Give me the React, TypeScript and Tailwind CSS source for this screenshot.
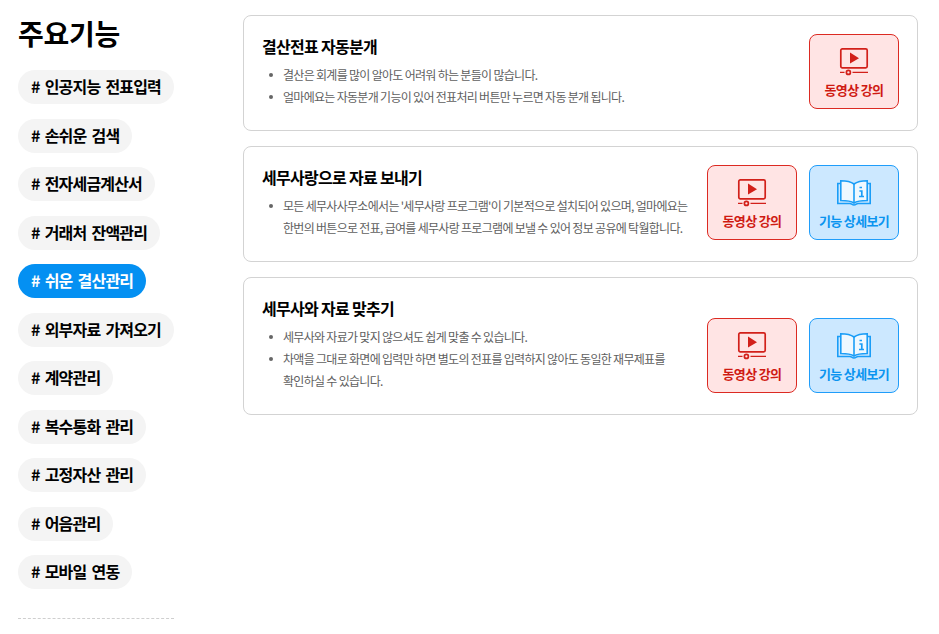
import React from 'react';

const FONT = '[font-family:"Noto_Sans_CJK_KR","Noto_Sans",sans-serif]';

const MENU = [
  { label: '인공지능 전표입력' },
  { label: '손쉬운 검색' },
  { label: '전자세금계산서' },
  { label: '거래처 잔액관리' },
  { label: '쉬운 결산관리', active: true },
  { label: '외부자료 가져오기' },
  { label: '계약관리' },
  { label: '복수통화 관리' },
  { label: '고정자산 관리' },
  { label: '어음관리' },
  { label: '모바일 연동' },
];

const CARDS = [
  {
    title: '결산전표 자동분개',
    items: [
      ['결산은 회계를 많이 알아도 어려워 하는 분들이 많습니다.'],
      ['얼마에요는 자동분개 기능이 있어 전표처리 버튼만 누르면 자동 분개 됩니다.'],
    ],
    detail: false,
  },
  {
    title: '세무사랑으로 자료 보내기',
    items: [
      [
        "모든 세무사사무소에서는 '세무사랑 프로그램'이 기본적으로 설치되어 있으며, 얼마에요는",
        '한번의 버튼으로 전표, 급여를 세무사랑 프로그램에 보낼 수 있어 정보 공유에 탁월합니다.',
      ],
    ],
    detail: true,
  },
  {
    title: '세무사와 자료 맞추기',
    items: [
      ['세무사와 자료가 맞지 않으셔도 쉽게 맞출 수 있습니다.'],
      ['차액을 그대로 화면에 입력만 하면 별도의 전표를 입력하지 않아도 동일한 재무제표를', '확인하실 수 있습니다.'],
    ],
    detail: true,
  },
];

function VideoIcon() {
  return (
    <svg className="overflow-visible" width="28" height="27" viewBox="0 0 28 27" fill="none" stroke="#d2201a" strokeWidth="1.7">
      <rect x="0.8" y="0.8" width="26.4" height="19" rx="1.5" />
      <path d="M10 4.5 L19 10.2 L10 15.6 Z" fill="#d2201a" stroke="none" />
      <path d="M0 24.4 H4.5 M12.5 24.4 H28" strokeWidth="1.4" />
      <circle cx="8.4" cy="24.4" r="2" />
    </svg>
  );
}

function BookIcon() {
  return (
    <svg width="34" height="26" viewBox="0 0 34 26" fill="none" stroke="#1a9df7" strokeWidth="1.6">
      <path
        d="M17 4 C14 1.8 9 0.8 3.8 0.8 V20.5 C9 20.5 14 21 17 23 C20 21 25 20.5 30.2 20.5 V0.8 C25 0.8 20 1.8 17 4 Z"
        fill="#eef8ff"
      />
      <path d="M17 4 V23" />
      <path d="M3.8 3.5 H0.8 V23.5 H13 C14.5 23.5 15 25 17 25 C19 25 19.5 23.5 21 23.5 H33.2 V3.5 H30.2" />
      <path d="M22.5 7.5 H25 M22.4 11 H24.8 V16.5 M22 16.5 H27" strokeWidth="1.7" />
    </svg>
  );
}

function ActionButton({ kind }: { kind: 'video' | 'detail' }) {
  const video = kind === 'video';
  return (
    <div
      className={`flex h-[75px] w-[90px] flex-col items-center rounded-lg border pt-[13px] ${
        video ? 'border-[#dc2a22] bg-[#ffe4e4] text-[#cf1a12]' : 'border-[#1f9dfa] bg-[#cce8ff] text-[#0a94f0]'
      }`}
    >
      <div className="flex h-[27px] items-center">{video ? <VideoIcon /> : <BookIcon />}</div>
      <div className="mt-[6px] text-[13px] leading-[18px] font-bold tracking-[-0.65px] whitespace-nowrap">
        {video ? '동영상 강의' : '기능 상세보기'}
      </div>
    </div>
  );
}

function Card({ card }: { card: (typeof CARDS)[number] }) {
  return (
    <div className="flex items-end justify-between rounded-lg border border-[#d3d3d3] pt-[16px] pr-[18px] pb-[21px] pl-[18px]">
      <div className="pb-[2px]">
        <h3 className="text-[16px] leading-[28px] font-bold tracking-[-0.7px] text-black">{card.title}</h3>
        <ul className="mt-[4px] pl-[21px]">
          {card.items.map((lines) => (
            <li key={lines[0]} className="relative text-[12px] leading-[21.6px] tracking-[-0.7px] whitespace-nowrap text-[#606060]">
              <span className="absolute top-[9px] -left-[14px] h-[4px] w-[4px] rounded-full bg-[#666]" />
              {lines.map((line) => (
                <div key={line}>{line}</div>
              ))}
            </li>
          ))}
        </ul>
      </div>
      <div className="flex gap-3">
        <ActionButton kind="video" />
        {card.detail ? <ActionButton kind="detail" /> : null}
      </div>
    </div>
  );
}

export default function App() {
  return (
    <div className={`flex h-[634px] w-[939px] overflow-hidden bg-white pt-[15px] pl-[18px] ${FONT}`}>
      <aside className="w-[156px] shrink-0">
        <h2 className="-mt-px text-[28px] leading-[38px] font-bold tracking-[-0.3px] text-black">주요기능</h2>
        <div className="mt-[18px] flex flex-col items-start gap-[14.5px]">
          {MENU.map((item) => (
            <div
              key={item.label}
              className={`flex h-[34px] items-center rounded-full px-[13px] pb-[2px] text-[16px] font-bold tracking-[-0.83px] [word-spacing:2.3px] whitespace-nowrap ${
                item.active ? 'bg-[#0490f2] text-white' : 'bg-[#f4f4f4] text-black'
              }`}
            >
              # {item.label}
            </div>
          ))}
        </div>
        <div className="mt-[29px] border-t border-dashed border-[#cfcfcf]" />
      </aside>
      <main className="ml-[69px] flex w-[675px] shrink-0 flex-col gap-[15px] self-start">
        {CARDS.map((card) => (
          <Card key={card.title} card={card} />
        ))}
      </main>
    </div>
  );
}
